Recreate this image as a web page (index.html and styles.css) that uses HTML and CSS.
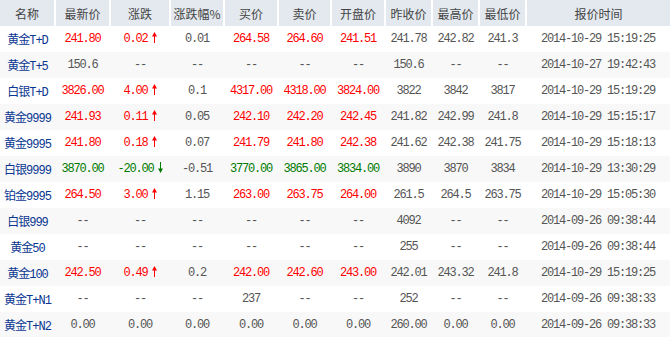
FILE: index.html
```html
<!DOCTYPE html>
<html lang="zh-CN">
<head>
  <meta charset="UTF-8" />
  <title>行情报价</title>
  <link rel="stylesheet" href="styles.css">
</head>
<body>

<table class="quotes">
  <colgroup>
    <col style="width:55px"><col style="width:55px"><col style="width:60px"><col style="width:54px">
    <col style="width:54px"><col style="width:53px"><col style="width:54px"><col style="width:47px">
    <col style="width:47px"><col style="width:47px"><col style="width:144px">
  </colgroup>
  <thead>
    <tr>
      <th>名称</th><th>最新价</th><th>涨跌</th><th>涨跌幅%</th><th>买价</th><th>卖价</th>
      <th>开盘价</th><th>昨收价</th><th>最高价</th><th>最低价</th><th>报价时间</th>
    </tr>
  </thead>
  <tbody id="rows"></tbody>
</table>

<script>
  // name, last, change, pct, bid, ask, open, prevClose, high, low, time, trend
  const data = [
    ["黄金T+D", "241.80", "0.02", "0.01", "264.58", "264.60", "241.51", "241.78", "242.82", "241.3", "2014-10-29 15:19:25", "up"],
    ["黄金T+5", "150.6", "--", "--", "--", "--", "--", "150.6", "--", "--", "2014-10-27 19:42:43", ""],
    ["白银T+D", "3826.00", "4.00", "0.1", "4317.00", "4318.00", "3824.00", "3822", "3842", "3817", "2014-10-29 15:19:29", "up"],
    ["黄金9999", "241.93", "0.11", "0.05", "242.10", "242.20", "242.45", "241.82", "242.99", "241.8", "2014-10-29 15:15:17", "up"],
    ["黄金9995", "241.80", "0.18", "0.07", "241.79", "241.80", "242.38", "241.62", "242.38", "241.75", "2014-10-29 15:18:13", "up"],
    ["白银9999", "3870.00", "-20.00", "-0.51", "3770.00", "3865.00", "3834.00", "3890", "3870", "3834", "2014-10-29 13:30:29", "down"],
    ["铂金9995", "264.50", "3.00", "1.15", "263.00", "263.75", "264.00", "261.5", "264.5", "263.75", "2014-10-29 15:05:30", "up"],
    ["白银999", "--", "--", "--", "--", "--", "--", "4092", "--", "--", "2014-09-26 09:38:44", ""],
    ["黄金50", "--", "--", "--", "--", "--", "--", "255", "--", "--", "2014-09-26 09:38:44", ""],
    ["黄金100", "242.50", "0.49", "0.2", "242.00", "242.60", "243.00", "242.01", "243.32", "241.8", "2014-10-29 15:19:25", "up"],
    ["黄金T+N1", "--", "--", "--", "237", "--", "--", "252", "--", "--", "2014-09-26 09:38:33", ""],
    ["黄金T+N2", "0.00", "0.00", "0.00", "0.00", "0.00", "0.00", "260.00", "0.00", "0.00", "2014-09-26 09:38:33", ""]
  ];

  const arrows = {
    up: '<svg class="arrow" width="5" height="11" viewBox="0 0 5 11"><path d="M2.5 0L5 4.5H3V11H2V4.5H0Z" fill="currentColor"/></svg>',
    down: '<svg class="arrow" width="5" height="11" viewBox="0 0 5 11"><path d="M2.5 11L5 6.5H3V0H2V6.5H0Z" fill="currentColor"/></svg>'
  };

  let html = "";
  data.forEach(function (r) {
    const cls = r[11];
    const arrow = arrows[cls] || "";
    html += '<tr>';
    html += '<td class="name">' + r[0] + '</td>';
    html += '<td class="' + cls + '">' + r[1] + '</td>';
    html += '<td class="' + cls + '">' + r[2] + arrow + '</td>';
    html += '<td>' + r[3] + '</td>';
    html += '<td class="' + cls + '">' + r[4] + '</td>';
    html += '<td class="' + cls + '">' + r[5] + '</td>';
    html += '<td class="' + cls + '">' + r[6] + '</td>';
    for (let i = 7; i <= 10; i++) html += '<td>' + r[i] + '</td>';
    html += '</tr>';
  });
  document.getElementById("rows").innerHTML = html;
</script>

</body>
</html>
```

FILE: styles.css
```css
body {
  margin: 0;
  background: #fff;
  font-family: "Liberation Mono", "Noto Sans CJK SC", monospace;
  font-size: 12px;
  color: #555;
}
.quotes {
  width: 670px;
  table-layout: fixed;
  border-collapse: collapse;
}
.quotes th {
  height: 26px;
  padding: 0;
  background: #e3e9ef;
  color: #444;
  font-weight: normal;
  font-family: "Noto Sans CJK SC", sans-serif;
  border-right: 2px solid #fff;
  text-align: center;
  white-space: nowrap;
}
.quotes th:last-child { border-right: none; }
.quotes td {
  height: 26px;
  padding: 0;
  text-align: center;
  white-space: nowrap;
  letter-spacing: -1.2px;
}
.quotes tbody tr:nth-child(even) { background: #f8f8f8; }
.quotes td.name { color: #0a3791; letter-spacing: -1px; }
.up { color: #ff0000; }
.down { color: #007a00; }
.arrow {
  margin-left: 4px;
  vertical-align: -1px;
}
```
